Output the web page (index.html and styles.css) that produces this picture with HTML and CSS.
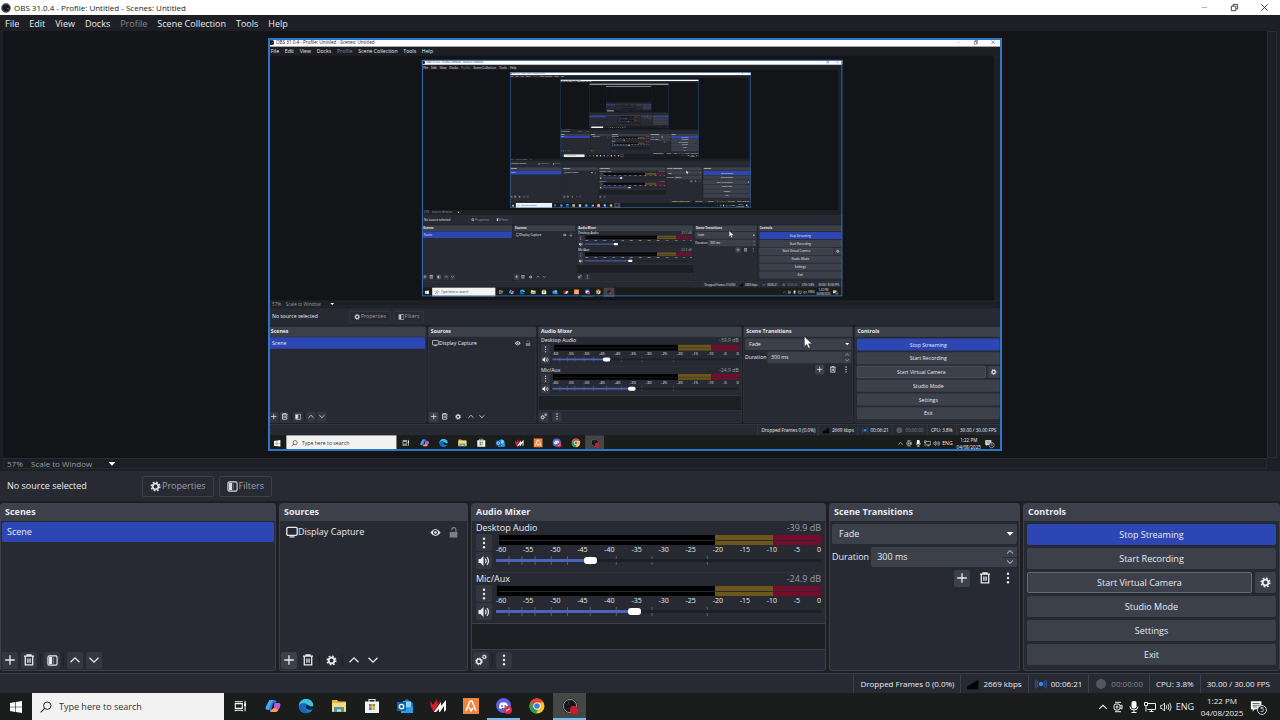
FILE: index.html
```html
<!DOCTYPE html>
<html lang="en">
<head>
<meta charset="utf-8">
<meta name="viewport" content="width=device-width, initial-scale=1">
<title>OBS 31.0.4 - Profile: Untitled - Scenes: Untitled</title>
<link rel="stylesheet" href="styles.css">
</head>
<body>
<svg class="sprite" aria-hidden="true">
  <symbol id="i-obs" viewBox="0 0 16 16"><circle cx="8" cy="8" r="7.6" fill="#15151c"/><circle cx="8" cy="8" r="6.6" fill="none" stroke="#c8c8d0" stroke-width=".7"/><g fill="#d8d8e0"><path d="M7.600 2.200a3 3 0 0 0 .8 5.200 3.200 3.200 0 0 1-.8-5.200z"/><path d="M7.600 2.200a3 3 0 0 0 .8 5.200 3.200 3.200 0 0 1-.8-5.200z" transform="rotate(120 8 8)"/><path d="M7.600 2.200a3 3 0 0 0 .8 5.200 3.200 3.200 0 0 1-.8-5.200z" transform="rotate(240 8 8)"/></g></symbol>
  <symbol id="i-min" viewBox="0 0 10 10"><path d="M2 5h6" stroke="#aaa" fill="none"/></symbol>
  <symbol id="i-restore" viewBox="0 0 10 10"><path d="M1.500 3.500h5v5h-5zM3.500 3.500v-2h5v5h-2" stroke="#333" fill="none"/></symbol>
  <symbol id="i-close" viewBox="0 0 10 10"><path d="M1.500 1.500l7 7M8.500 1.500l-7 7" stroke="#333" fill="none"/></symbol>
  <symbol id="i-plus" viewBox="0 0 12 12"><path d="M6 1.200v9.600M1.200 6h9.600" stroke="currentColor" stroke-width="1.300" fill="none"/></symbol>
  <symbol id="i-trash" viewBox="0 0 12 12"><path d="M1 2.200h10M4 2V.9h4V2M2.300 2.500v8.300h7.400V2.500M4.900 4.500v4.200M7.100 4.500v4.200" stroke="currentColor" stroke-width="1.300" fill="none"/></symbol>
  <symbol id="i-filter" viewBox="0 0 12 12"><rect x="1" y="1" width="10" height="10" rx="1.500" fill="none" stroke="currentColor" stroke-width="1.200"/><path d="M2 2h3.500v8H2z" fill="currentColor"/><path d="M6.800 2.500v7" stroke="currentColor" stroke-width=".8" opacity=".6"/></symbol>
  <symbol id="i-up" viewBox="0 0 12 12"><path d="M1.500 8.300L6 3.900l4.500 4.400" stroke="currentColor" stroke-width="1.300" fill="none"/></symbol>
  <symbol id="i-down" viewBox="0 0 12 12"><path d="M1.500 3.700L6 8.100l4.500-4.400" stroke="currentColor" stroke-width="1.300" fill="none"/></symbol>
  <symbol id="i-gear" viewBox="0 0 12 12"><circle cx="6" cy="6" r="3.100" fill="none" stroke="currentColor" stroke-width="2"/><circle cx="6" cy="6" r="4.700" fill="none" stroke="currentColor" stroke-width="1.700" stroke-dasharray="1.900 1.790"/></symbol>
  <symbol id="i-gears" viewBox="0 0 12 12"><circle cx="4" cy="7.400" r="2.300" fill="none" stroke="currentColor" stroke-width="1.500"/><circle cx="4" cy="7.400" r="3.400" fill="none" stroke="currentColor" stroke-dasharray="1.330"/><circle cx="9.300" cy="2.900" r="1.400" fill="none" stroke="currentColor" stroke-width="1.100"/><circle cx="9.300" cy="2.900" r="2.200" fill="none" stroke="currentColor" stroke-width=".7" stroke-dasharray=".86"/></symbol>
  <symbol id="i-dots" viewBox="0 0 12 12"><g fill="currentColor"><circle cx="6" cy="1.700" r="1.200"/><circle cx="6" cy="6" r="1.200"/><circle cx="6" cy="10.300" r="1.200"/></g></symbol>
  <symbol id="i-speaker" viewBox="0 0 12 12"><path d="M.5 4v4h2l3 3V1l-3 3z" fill="currentColor"/><path d="M7.300 3.800q1.500 2.200 0 4.400M9 2.200q3 3.800 0 7.600" stroke="currentColor" stroke-width="1.200" fill="none"/></symbol>
  <symbol id="i-monitor" viewBox="0 0 12 12"><rect x=".8" y="1.300" width="10.400" height="8" rx="1.300" fill="none" stroke="currentColor" stroke-width="1.300"/><path d="M3.500 10.900h5" stroke="currentColor" stroke-width="1.200"/></symbol>
  <symbol id="i-eye" viewBox="0 0 12 12"><path d="M.4 6Q6-1.800 11.600 6 6 13.800.4 6z" fill="currentColor"/><circle cx="6" cy="6" r="2.700" fill="#272a33"/><circle cx="6" cy="6" r="1.400" fill="currentColor"/></symbol>
  <symbol id="i-lock" viewBox="0 0 12 12"><path d="M1.800 5.500h8.400v6H1.800z" fill="#7d7f86"/><path d="M4 3.600V3.200a2.300 2.300 0 0 1 4.600-.4V5.500" fill="none" stroke="#7d7f86" stroke-width="1.300"/></symbol>
  <symbol id="i-caret" viewBox="0 0 8 8"><path d="M.6 2h6.800L4 5.800z" fill="#fff"/></symbol>
  <symbol id="i-signal" viewBox="0 0 12 12"><path d="M0 8.500l3.500-2 4-2.500 4-2.500v10H0z" fill="#050507"/></symbol>
  <symbol id="i-live" viewBox="0 0 12 12"><circle cx="6" cy="6" r="2.200" fill="#3f86d6"/><path d="M3 2.800q-2 3.200 0 6.400M9 2.800q2 3.200 0 6.400M1.300 1.600q-2.200 4.400 0 8.800M10.700 1.600q2.200 4.400 0 8.800" stroke="#2c62a5" fill="none"/></symbol>
  <symbol id="i-rec" viewBox="0 0 12 12"><circle cx="6" cy="6" r="5" fill="#55575f"/></symbol>
  <symbol id="i-win" viewBox="0 0 12 12"><path d="M0 1.900l5.400-.8v4.600H0zM6 1l6-.9v5.600H6zM0 6.300h5.400v4.600L0 10.100zM6 6.300h6v5.600L6 11z" fill="#fff"/></symbol>
  <symbol id="i-search" viewBox="0 0 12 12"><circle cx="7.300" cy="4.700" r="3.700" fill="none" stroke="#222"/><path d="M4.600 7.400L.7 11.300" stroke="#222" stroke-width="1.100"/></symbol>
  <symbol id="i-taskview" viewBox="0 0 16 16"><g fill="none" stroke="#fff" stroke-width="1.200"><path d="M2.600 5.300h8v5.400h-8zM2.600 3.500v-1M10.600 3.500v-1M2.600 12.500v1.500M10.600 12.500v1.500M13.800 2v12M2.600 3.200h8M2.600 12.800h8"/></g><path d="M12.700 5h2.200v3h-2.200z" fill="#fff"/></symbol>
  <symbol id="i-copilot" viewBox="0 0 16 16"><path d="M4.500 2h5.200q1.500 0 2 2l-3.500 1.300-2 6.700H2.500Q0 12 1 8.500z" fill="#2577dc"/><path d="M4.500 2h4L6 6l-2 5.500H2Q0 11 1 8.500z" fill="#45a5ea"/><path d="M9.500 5h4Q16 5 15 8.500l-2 4q-1 1.500-3 1.500H6.500q-1.500 0-1-2h2q1 0 1.300-1.300z" fill="#f25b88"/><path d="M10 5h3.700Q16 5.300 15 8.500l-1 2.500-5-1z" fill="#b85ae4"/><path d="M5.200 12.500L9 10l4.300 1.800q-.8 2.200-3.300 2.200H6.500q-1.500 0-1.300-1.500z" fill="#ff9c54"/></symbol>
  <symbol id="i-edge" viewBox="0 0 16 16"><circle cx="8" cy="8" r="7.300" fill="#1685d2"/><path d="M.9 7.800C1.500.2 13-1.800 15.200 6.500c.4 3-2 4.300-5 3.700C12 6.700 7.300 4.400.9 7.800z" fill="#42bfd8"/><path d="M1 7.500C4 3.800 8.600 4.700 8.800 6.700c-3 1.900-2 6.300 2 7.700C5.500 17 1 12.500 1 7.500z" fill="#1368bd"/><path d="M9 6.500c-3 2.700-.2 7 6.200 4.500l.5-3-3 .5z" fill="#11233a"/></symbol>
  <symbol id="i-folder" viewBox="0 0 16 16"><path d="M1 2h5l1.500 1.500H15V14H1z" fill="#e6b94f"/><path d="M1 5h14v8H1z" fill="#ffdc78"/><path d="M3 9h10v5h-3v-2.500H6V14H3z" fill="#3c9bc6"/></symbol>
  <symbol id="i-store" viewBox="0 0 16 16"><path d="M5 4V1.500h6V4" stroke="#ddd" fill="none" stroke-width="1.200"/><path d="M1 3.500h14V15H1z" fill="#f3f3f3"/><path d="M5 6h2.700v2.700H5z" fill="#dd4b35"/><path d="M8.300 6H11v2.700H8.300z" fill="#67a93b"/><path d="M5 9.300h2.700V12H5z" fill="#2f83c6"/><path d="M8.300 9.300H11V12H8.300z" fill="#e1aa2d"/></symbol>
  <symbol id="i-outlook" viewBox="0 0 16 16"><path d="M4 5l6-4 6 4v9H4z" fill="#1479ce"/><path d="M6 3.500h8v6H6z" fill="#8bd2f7"/><path d="M4 8l6 3 6-3v7H4z" fill="#2a9fe8"/><path d="M0 4h9v9H0z" fill="#1064ae"/><circle cx="4.500" cy="8.500" r="2.200" fill="none" stroke="#fff" stroke-width="1.300"/></symbol>
  <symbol id="i-vm" viewBox="0 0 16 16"><path d="M0 3l3 4 4-6v5l4-4-7 12-3-5z" fill="#d61e2f"/><path d="M4 14l7-10v4l5-6v10l-2 2V8l-4 6H9v-3l-3 3z" fill="#fff"/></symbol>
  <symbol id="i-aftr" viewBox="0 0 16 16"><path d="M0 0h16v16H0z" fill="#f0843b"/><path d="M3 13l4-10h2l4 10M6 9l2 4 2-3" fill="none" stroke="#fff" stroke-width="1.500"/></symbol>
  <symbol id="i-discord" viewBox="0 0 16 16"><circle cx="7.500" cy="7.500" r="7.500" fill="#5c61df"/><path d="M3 10q0-4 2-5.500h5Q12 6 12 10l-2 1-1-1H6l-1 1z" fill="#fff"/><circle cx="6" cy="8" r=".9" fill="#5c61df"/><circle cx="9.200" cy="8" r=".9" fill="#5c61df"/><circle cx="12" cy="12" r="4" fill="#d92c45"/><path d="M10 13l4-2.500" stroke="#fff"/></symbol>
  <symbol id="i-chrome" viewBox="0 0 16 16"><circle cx="8" cy="8" r="7.500" fill="#f5c62c"/><path d="M1.500 4.300A7.500 7.500 0 0 1 14.700 4.500H8a3.500 3.500 0 0 0-3.200 5z" fill="#e64335"/><path d="M1.500 4.300L5 10.200a3.500 3.500 0 0 0 4 1.200L7 15.500A7.500 7.500 0 0 1 1.500 4.300z" fill="#2d9d4c"/><circle cx="8" cy="8" r="3.600" fill="#fff"/><circle cx="8" cy="8" r="2.800" fill="#3b7ded"/></symbol>
  <symbol id="i-obsrec" viewBox="0 0 16 16"><use href="#i-obs"/><circle cx="12" cy="12" r="4" fill="#d31a2b"/></symbol>
  <symbol id="i-meet" viewBox="0 0 12 12"><g fill="none" stroke="#eee"><path d="M3 1.300h6M3 10.700h6"/><rect x="2" y="3" width="6" height="6" rx="2"/><circle cx="5" cy="6" r="1"/><path d="M8 5l2-1v4L8 7"/></g></symbol>
  <symbol id="i-mic" viewBox="0 0 12 12"><rect x="3.500" y="0" width="5" height="7.500" rx="2" fill="#fff"/><path d="M2 5.500q0 3.500 4 3.500t4-3.500M6 9v3M3.500 11.500h5" stroke="#fff" fill="none"/></symbol>
  <symbol id="i-net" viewBox="0 0 12 12"><path d="M3.500 2.500h8v6h-8M5.500 10.500h4M7.500 8.500v2M.5 1.500h3v3h-3zM2 4.500v6" stroke="#eee" fill="none"/></symbol>
  <symbol id="i-vol" viewBox="0 0 12 12"><path d="M.7 4.500v3h1.500L4.500 10V2L2.200 4.500zM6.200 4.200q1.200 1.800 0 3.600M8 3q2 3 0 6M9.700 1.800q3 4.200 0 8.400" stroke="#eee" stroke-width=".9" fill="none"/></symbol>
  <symbol id="i-note" viewBox="0 0 16 16"><path d="M1 1.500h12v9H5.500L3 13v-2.500H1z" fill="#fff"/><path d="M3 4h8M3 6h8M3 8h5" stroke="#555"/></symbol>
  <symbol id="i-cursor" viewBox="0 0 12 18"><path d="M1 1v13.500l3.200-2.900 2.200 5 2.200-1-2.200-4.800H11z" fill="#fff" stroke="#222" stroke-width=".6"/></symbol>
</svg>

<div class="desktop" id="desktop">
  <header class="titlebar">
    <svg class="ic10"><use href="#i-obs"/></svg>
    <span>OBS 31.0.4 - Profile: Untitled - Scenes: Untitled</span>
    <div class="window-buttons">
      <button aria-label="Minimize"><svg class="ic9"><use href="#i-min"/></svg></button>
      <button aria-label="Restore"><svg class="ic9"><use href="#i-restore"/></svg></button>
      <button aria-label="Close"><svg class="ic9"><use href="#i-close"/></svg></button>
    </div>
  </header>
  <nav class="menubar">
    <button>File</button><button>Edit</button><button>View</button><button>Docks</button><button class="dim">Profile</button><button>Scene Collection</button><button>Tools</button><button>Help</button>
  </nav>

  <main class="workspace">
    <section class="preview" aria-label="Preview">
      <div class="viewport"><div class="stage"></div></div>
      <div class="scroll-v"></div>
      <div class="zoombar">
        <span class="zoom-value">57%</span>
        <span class="zoom-pick"><select aria-label="Preview scale"><option>Scale to Window</option></select><svg class="ic8"><use href="#i-caret"/></svg></span>
      </div>
    </section>

    <section class="contextbar">
      <span class="context-name">No source selected</span>
      <button class="ghost"><svg class="ic11"><use href="#i-gear"/></svg>Properties</button>
      <button class="ghost"><svg class="ic11"><use href="#i-filter"/></svg>Filters</button>
    </section>

    <div class="docks">
      <section class="dock">
        <h2>Scenes</h2>
        <ul class="list"><li class="row selected">Scene</li></ul>
        <div class="tools">
          <button aria-label="Add scene"><svg class="ic12"><use href="#i-plus"/></svg></button>
          <button aria-label="Remove scene"><svg class="ic12"><use href="#i-trash"/></svg></button>
          <i class="sep"></i>
          <button aria-label="Scene filters"><svg class="ic11"><use href="#i-filter"/></svg></button>
          <i class="sep"></i>
          <button aria-label="Move scene up"><svg class="ic12"><use href="#i-up"/></svg></button>
          <button aria-label="Move scene down"><svg class="ic12"><use href="#i-down"/></svg></button>
        </div>
      </section>

      <section class="dock">
        <h2>Sources</h2>
        <ul class="list"><li class="row source"><svg class="ic12"><use href="#i-monitor"/></svg><span class="grow">Display Capture</span><button aria-label="Hide source"><svg class="ic11"><use href="#i-eye"/></svg></button><button aria-label="Lock source"><svg class="ic11"><use href="#i-lock"/></svg></button></li></ul>
        <div class="tools flat">
          <button class="lit" aria-label="Add source"><svg class="ic12"><use href="#i-plus"/></svg></button>
          <button aria-label="Remove source"><svg class="ic12"><use href="#i-trash"/></svg></button>
          <i class="sep"></i>
          <button aria-label="Source properties"><svg class="ic11"><use href="#i-gear"/></svg></button>
          <i class="sep"></i>
          <button aria-label="Move source up"><svg class="ic12"><use href="#i-up"/></svg></button>
          <button aria-label="Move source down"><svg class="ic12"><use href="#i-down"/></svg></button>
        </div>
      </section>

      <section class="dock">
        <h2>Audio Mixer</h2>
        <div class="channels">
          <div class="channel">
            <div class="channel-head"><span>Desktop Audio</span><span class="db">-39.9 dB</span></div>
            <div class="channel-body">
              <div class="channel-buttons">
                <button aria-label="Desktop Audio options"><svg class="ic12"><use href="#i-dots"/></svg></button>
                <button aria-label="Mute Desktop Audio"><svg class="ic12"><use href="#i-speaker"/></svg></button>
              </div>
              <div class="levels">
                <div class="meter"><i></i><i></i></div>
                <div class="scale"><span>-60</span><span>-55</span><span>-50</span><span>-45</span><span>-40</span><span>-35</span><span>-30</span><span>-25</span><span>-20</span><span>-15</span><span>-10</span><span>-5</span><span>0</span></div>
                <div class="fader">
                  <svg class="ticks"><line x1="4%" x2="4%" y2="9"/><line x1="8%" x2="8%" y2="9"/><line x1="12%" x2="12%" y2="9"/><line x1="17%" x2="17%" y2="9"/><line x1="22%" x2="22%" y2="9"/><line x1="29%" x2="29%" y2="9"/><line x1="37%" x2="37%" y2="9"/><line x1="48%" x2="48%" y2="9"/><line x1="65%" x2="65%" y2="9"/></svg>
                  <input type="range" aria-label="Desktop Audio volume" min="0" max="1000" value="281" style="--fill:29%">
                </div>
              </div>
            </div>
          </div>
          <div class="channel">
            <div class="channel-head"><span>Mic/Aux</span><span class="db">-24.9 dB</span></div>
            <div class="channel-body">
              <div class="channel-buttons">
                <button aria-label="Mic/Aux options"><svg class="ic12"><use href="#i-dots"/></svg></button>
                <button aria-label="Mute Mic/Aux"><svg class="ic12"><use href="#i-speaker"/></svg></button>
              </div>
              <div class="levels">
                <div class="meter active"><i></i><i></i></div>
                <div class="scale"><span>-60</span><span>-55</span><span>-50</span><span>-45</span><span>-40</span><span>-35</span><span>-30</span><span>-25</span><span>-20</span><span>-15</span><span>-10</span><span>-5</span><span>0</span></div>
                <div class="fader">
                  <svg class="ticks"><line x1="4%" x2="4%" y2="9"/><line x1="8%" x2="8%" y2="9"/><line x1="12%" x2="12%" y2="9"/><line x1="17%" x2="17%" y2="9"/><line x1="22%" x2="22%" y2="9"/><line x1="29%" x2="29%" y2="9"/><line x1="37%" x2="37%" y2="9"/><line x1="48%" x2="48%" y2="9"/><line x1="65%" x2="65%" y2="9"/></svg>
                  <input type="range" aria-label="Mic/Aux volume" min="0" max="1000" value="422" style="--fill:42%">
                </div>
              </div>
            </div>
          </div>
        </div>
        <div class="mixer-empty"></div>
        <div class="tools">
          <button aria-label="Advanced audio properties"><svg class="ic12"><use href="#i-gears"/></svg></button>
          <i class="sep"></i>
          <button aria-label="Mixer menu"><svg class="ic12"><use href="#i-dots"/></svg></button>
        </div>
      </section>

      <section class="dock">
        <h2>Scene Transitions</h2>
        <div class="transitions">
          <div class="combo"><select aria-label="Transition"><option>Fade</option></select><svg class="ic8"><use href="#i-caret"/></svg></div>
          <div class="duration">
            <label for="duration">Duration</label>
            <div class="spin"><input id="duration" type="text" value="300 ms"><div class="spin-buttons"><button aria-label="Increase"><svg class="ic8"><use href="#i-up"/></svg></button><button aria-label="Decrease"><svg class="ic8"><use href="#i-down"/></svg></button></div></div>
          </div>
          <div class="tools flat end">
            <button class="lit" aria-label="Add transition"><svg class="ic12"><use href="#i-plus"/></svg></button>
            <button aria-label="Remove transition"><svg class="ic12"><use href="#i-trash"/></svg></button>
            <button aria-label="Transition menu"><svg class="ic12"><use href="#i-dots"/></svg></button>
          </div>
        </div>
      </section>

      <section class="dock">
        <h2>Controls</h2>
        <div class="controls">
          <button class="primary">Stop Streaming</button>
          <button>Start Recording</button>
          <div class="camera"><button class="outlined">Start Virtual Camera</button><button aria-label="Virtual camera settings"><svg class="ic11"><use href="#i-gear"/></svg></button></div>
          <button>Studio Mode</button>
          <button>Settings</button>
          <button>Exit</button>
        </div>
      </section>
    </div>
  </main>

  <footer class="statusbar">
    <span>Dropped Frames 0 (0.0%)</span>
    <span><svg class="ic12"><use href="#i-signal"/></svg>2669 kbps</span>
    <span><svg class="ic12"><use href="#i-live"/></svg>00:06:21</span>
    <span class="dim"><svg class="ic12"><use href="#i-rec"/></svg>00:00:00</span>
    <span>CPU: 3.8%</span>
    <span>30.00 / 30.00 FPS</span>
  </footer>

  <div class="taskbar">
    <button class="start" aria-label="Start"><svg class="ic12"><use href="#i-win"/></svg></button>
    <label class="search"><svg class="ic12"><use href="#i-search"/></svg><input type="text" placeholder="Type here to search" aria-label="Type here to search"></label>
    <div class="apps">
      <button aria-label="Task view"><svg class="ic14"><use href="#i-taskview"/></svg></button>
      <button aria-label="Copilot"><svg class="ic16"><use href="#i-copilot"/></svg></button>
      <button aria-label="Edge"><svg class="ic16"><use href="#i-edge"/></svg></button>
      <button aria-label="File Explorer"><svg class="ic16"><use href="#i-folder"/></svg></button>
      <button aria-label="Store"><svg class="ic16"><use href="#i-store"/></svg></button>
      <button aria-label="Outlook"><svg class="ic16"><use href="#i-outlook"/></svg></button>
      <button aria-label="Voicemeeter"><svg class="ic16"><use href="#i-vm"/></svg></button>
      <button aria-label="Design tool"><svg class="ic16"><use href="#i-aftr"/></svg></button>
      <button class="running" aria-label="Discord"><svg class="ic16"><use href="#i-discord"/></svg></button>
      <button aria-label="Chrome"><svg class="ic16"><use href="#i-chrome"/></svg></button>
      <button class="current" aria-label="OBS Studio"><svg class="ic16"><use href="#i-obsrec"/></svg></button>
    </div>
    <div class="tray">
      <svg class="ic10"><use href="#i-up"/></svg>
      <svg class="ic12"><use href="#i-meet"/></svg>
      <svg class="ic12"><use href="#i-mic"/></svg>
      <svg class="ic12"><use href="#i-net"/></svg>
      <svg class="ic12"><use href="#i-vol"/></svg>
      <span>ENG</span>
      <time class="clock"><span>1:22 PM</span><span>04/08/2025</span></time>
      <div class="note"><svg class="ic14"><use href="#i-note"/></svg><span class="badge">5</span></div>
    </div>
  </div>
</div>
<script src="preview.js"></script>
</body>
</html>
```
FILE: styles.css
```css
* { box-sizing: border-box; }

body {
  margin: 0;
  height: 100vh;
  overflow: hidden;
  background: #1d1f24;
  color: #e9eaee;
  font: 9px/12px "Open Sans", "Noto Sans", sans-serif;
}

button, input, select {
  margin: 0;
  padding: 0;
  border: 0;
  background: none;
  color: inherit;
  font: inherit;
  appearance: none;
  outline: none;
}

button { display: flex; align-items: center; justify-content: center; }
svg { display: block; flex: none; }
h2, ul { margin: 0; padding: 0; list-style: none; }

.sprite { position: absolute; width: 0; height: 0; }
.ic8 { width: 8px; height: 8px; }
.ic9 { width: 9px; height: 9px; }
.ic10 { width: 10px; height: 10px; }
.ic11 { width: 11px; height: 11px; }
.ic12 { width: 12px; height: 12px; }
.ic14 { width: 14px; height: 14px; }
.ic16 { width: 16px; height: 16px; }

.desktop {
  display: flex;
  flex-direction: column;
  width: 100%;
  height: 100%;
  background: #1d1f24;
}

.titlebar {
  display: flex;
  align-items: center;
  gap: 3px;
  height: 15px;
  padding: 0 1px;
  background: #fff;
  color: #222;
  font-size: 8px;
}
.window-buttons { display: flex; margin-left: auto; }
.window-buttons button { width: 30px; height: 15px; }

.menubar { display: flex; gap: 10px; height: 16px; padding: 2px 5px 0; }
.dim { color: #85878e; }

.workspace { display: flex; flex-direction: column; flex: 1; min-height: 0; gap: 2px; }

.preview {
  display: grid;
  grid-template: minmax(0, 1fr) 11px / minmax(0, 1fr) 10px;
  flex: 1;
  min-height: 0;
  padding: 0 3px;
}
.viewport {
  display: flex;
  justify-content: center;
  min-height: 0;
  padding: 7px 0;
  background: #131418;
}
.stage { position: relative; height: 100%; aspect-ratio: 16 / 9; overflow: hidden; background: #131418; }
.stage::after { content: ""; position: absolute; inset: 0; border: 2px solid #2f74c8; }
.screen { position: absolute; top: 0; left: 0; transform-origin: 0 0; }
.pointer { position: absolute; left: 73%; top: 72%; width: 16px; height: 26px; }
.scroll-v { border: 1px solid #292b31; }
.zoombar { display: flex; align-items: center; border: 1px solid #292b31; padding-left: 3px; color: #999ba1; font-size: 8px; }
.zoom-value { width: 24px; }
.zoom-pick { display: flex; align-items: center; justify-content: space-between; width: 85px; }
.zoom-pick select { flex: 1; }

.contextbar { display: flex; align-items: center; gap: 5px; height: 30px; padding: 0 7px; background: #272a33; }
.context-name { width: 130px; }
.ghost { gap: 1px; height: 21px; padding: 0 7px; border: 1px solid #3c404b; border-radius: 2px; color: #9c9ea6; }
.ghost svg { color: #d8d9de; }

.docks { display: grid; grid-template-columns: 276fr 189fr 355fr 191fr 257fr; gap: 3px; height: 168px; }
.dock { display: flex; flex-direction: column; min-width: 0; border: 1px solid #3c404b; border-radius: 3px; background: #272a33; }
.dock h2 { height: 17px; padding: 0 4px; background: #3c404b; font-size: 9px; line-height: 16px; }
.list { flex: 1; padding: 1px; }
.row { display: flex; align-items: center; height: 20px; padding: 0 5px; border-radius: 2px; }
.selected { background: #2c47b4; }
.grow { flex: 1; }
.source { padding: 0 4px 0 5px; }
.source button { width: 18px; }

.tools { display: flex; align-items: center; gap: 3px; height: 20px; padding: 0 1px; }
.tools button { width: 16px; height: 17px; border-radius: 2px; background: #343741; }
.tools.flat button { background: none; }
.tools.flat .lit { background: #3c404b; }
.sep { width: 1px; height: 12px; background: #1d1f24; }

.channels { padding: 0 4px; }
.channel { height: 51px; padding-top: 1px; }
.channel + .channel { border-top: 1px solid #30333d; padding-top: 0; }
.channel-head { display: flex; justify-content: space-between; height: 12px; }
.db { color: #9c9ea6; }
.channel-body { display: flex; gap: 4px; }
.channel-buttons { display: flex; flex-direction: column; gap: 1px; }
.channel-buttons button { width: 16px; height: 17px; border-radius: 2px; background: #343741; }
.levels { flex: 1; min-width: 0; }
.meter { display: flex; flex-direction: column; gap: 1px; margin-left: 3px; padding-top: 1px; height: 11px; }
.meter i { flex: 1; background: linear-gradient(90deg, #000 67%, #6d5619 67% 85%, #750c2b 85%); }
.meter.active { margin-left: 1px; border-left: 2px solid #000; }
.scale { display: flex; justify-content: space-between; height: 9px; font-size: 7px; line-height: 10px; }
.fader { position: relative; height: 13px; }
.ticks { position: absolute; top: 2px; width: 100%; height: 9px; stroke: #5b5e69; }
.fader input {
  position: relative;
  display: block;
  width: 100%;
  height: 13px;
  background: linear-gradient(90deg, #4964b8 var(--fill), #1d1f24 var(--fill)) center / 100% 3px no-repeat;
}
.fader input::-webkit-slider-thumb { appearance: none; width: 13px; height: 7px; border-radius: 3px; background: #fff; }
.mixer-empty { flex: 1; border: solid #3c404b; border-width: 1px 0; background: #1e1f24; }

.transitions { display: flex; flex-direction: column; gap: 3px; padding: 3px 2px; }
.combo { display: flex; align-items: center; height: 20px; padding: 0 3px 0 7px; border-radius: 2px; background: #3c404b; }
.combo select { flex: 1; }
.duration { display: flex; align-items: center; gap: 2px; }
.spin { display: flex; flex: 1; min-width: 0; height: 20px; padding-left: 6px; border-radius: 2px; background: #3c404b; }
.spin input { flex: 1; min-width: 0; }
.spin-buttons { display: flex; flex-direction: column; gap: 1px; width: 15px; background: #2a2d36; }
.spin-buttons button { flex: 1; background: #3c404b; }
.end { justify-content: flex-end; gap: 7px; height: 16px; }

.controls { display: flex; flex-direction: column; gap: 3px; padding: 3px; }
.controls button { height: 21px; border-radius: 2px; background: #3c404b; }
.controls .primary { background: #2c47b4; }
.camera { display: flex; gap: 3px; }
.camera button { width: 21px; }
.camera .outlined { flex: 1; border: 1px solid #656873; }

.statusbar { display: flex; justify-content: flex-end; height: 20px; margin-top: 2px; padding: 1px 4px 0 0; border-top: 1px solid #3c404b; background: #272a33; font-size: 8px; }
.statusbar span { display: flex; align-items: center; gap: 4px; padding: 0 6px; border-left: 1px solid #3c404b; }

.taskbar { display: flex; height: 27px; background: #1b1c1c; }
.start { width: 32px; }
.search { display: flex; align-items: center; gap: 7px; width: 192px; padding: 0 8px; background: #f2f2f2; color: #333; }
.search input { flex: 1; min-width: 0; font-size: 9px; }
.search input::placeholder { color: #333; opacity: 1; }
.apps { display: flex; }
.apps button { width: 33px; border-bottom: 2px solid transparent; }
.apps button:first-child { width: 32px; }
.apps .running { border-color: #76b9ed; }
.apps .current { background: #454646; border-color: #76b9ed; }
.tray { display: flex; align-items: center; gap: 4px; margin-left: auto; padding-right: 16px; }
.clock { display: flex; flex-direction: column; width: 48px; text-align: center; font-size: 8px; }
.note { position: relative; }
.badge { position: absolute; left: 7px; top: 5px; width: 10px; height: 10px; border: 1px solid #ccc; border-radius: 5px; background: #1b1c1c; font-size: 7px; line-height: 8px; text-align: center; }
```
FILE: preview.js
```js
// The display capture shows this very window, so the stage holds scaled copies of it.
const desktop = document.getElementById("desktop");
const stage = desktop.querySelector(".stage");
const DEPTH = 6;

function makeScreen(width, height, scale) {
  const screen = document.createElement("div");
  screen.className = "screen";
  screen.inert = true;
  screen.setAttribute("aria-hidden", "true");
  screen.style.width = width + "px";
  screen.style.height = height + "px";
  screen.style.transform = `scale(${scale})`;
  return screen;
}

function capture() {
  stage.replaceChildren();
  const template = desktop.cloneNode(true);
  template.removeAttribute("id");
  template.querySelector("#duration").removeAttribute("id");
  template.querySelector("label[for]").removeAttribute("for");
  const width = window.innerWidth;
  const height = window.innerHeight;
  const scale = stage.clientWidth / width;
  let target = stage;
  for (let level = 0; level < DEPTH; level++) {
    const screen = makeScreen(width, height, scale);
    const copy = template.cloneNode(true);
    screen.append(copy);
    screen.insertAdjacentHTML("beforeend", '<svg class="pointer"><use href="#i-cursor"/></svg>');
    target.append(screen);
    target = copy.querySelector(".stage");
  }
}

capture();
window.addEventListener("resize", capture);
```
